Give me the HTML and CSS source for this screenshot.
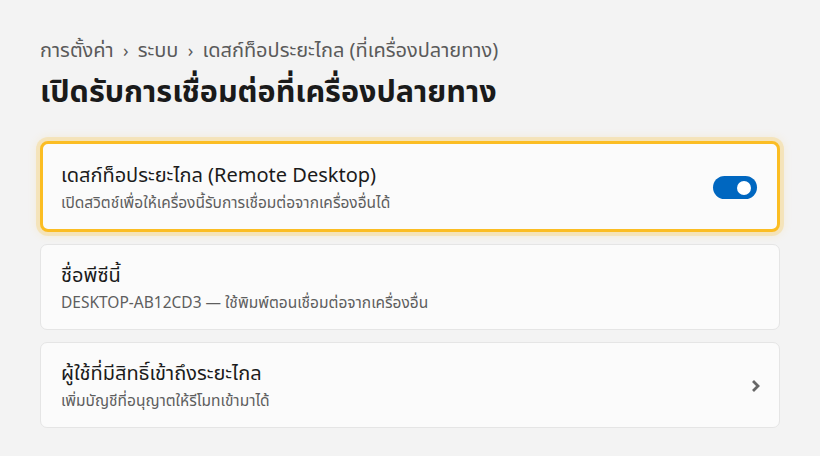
FILE: index.html
```html
<!DOCTYPE html>
<html lang="th">
<head>
<meta charset="utf-8">
<link rel="stylesheet" href="styles.css">
</head>
<body>
<main class="page">
  <nav class="crumbs">การตั้งค่า <span class="sep">›</span> ระบบ <span class="sep">›</span> เดสก์ท็อประยะไกล (ที่เครื่องปลายทาง)</nav>
  <h1 class="title">เปิดรับการเชื่อมต่อที่เครื่องปลายทาง</h1>
  <section class="list">
    <div class="card focused">
      <div class="text">
        <div class="head">เดสก์ท็อประยะไกล (Remote Desktop)</div>
        <div class="sub">เปิดสวิตช์เพื่อให้เครื่องนี้รับการเชื่อมต่อจากเครื่องอื่นได้</div>
      </div>
      <div class="toggle"><span class="knob"></span></div>
    </div>
    <div class="card">
      <div class="text">
        <div class="head">ชื่อพีซีนี้</div>
        <div class="sub">DESKTOP-AB12CD3 — ใช้พิมพ์ตอนเชื่อมต่อจากเครื่องอื่น</div>
      </div>
    </div>
    <div class="card">
      <div class="text">
        <div class="head">ผู้ใช้ที่มีสิทธิ์เข้าถึงระยะไกล</div>
        <div class="sub">เพิ่มบัญชีที่อนุญาตให้รีโมทเข้ามาได้</div>
      </div>
      <svg class="chev" width="10" height="14" viewBox="0 0 10 14"><path d="M3 3 L7 7 L3 11" fill="none" stroke="#666666" stroke-width="2.8" stroke-linecap="square" stroke-linejoin="miter"/></svg>
    </div>
  </section>
</main>
</body>
</html>
```
FILE: styles.css
```css
html, body {
  margin: 0;
  padding: 0;
  background: #f3f3f3;
}
body {
  font-family: "Noto Sans", "Noto Sans Thai", sans-serif;
  color: #1b1b1b;
}
.page {
  padding: 36px 40px 0 40px;
}
.crumbs {
  font-size: 20px;
  line-height: 28px;
  color: #5a5a5a;
}
.sep {
  font-size: 18px;
  padding: 0 4px;
}
.title {
  margin: 6px 0 0 0;
  font-size: 30.5px;
  line-height: 40px;
  font-weight: 700;
  color: #1a1a1a;
}
.list {
  margin-top: 31px;
  display: flex;
  flex-direction: column;
  gap: 12px;
}
.card {
  box-sizing: border-box;
  height: 86px;
  flex: none;
  background: #fbfbfb;
  border: 1px solid #e5e5e5;
  border-radius: 7px;
  padding: 0 20px;
  display: flex;
  align-items: center;
  justify-content: space-between;
}
.card.focused {
  height: 91px;
  border: 3px solid #fbbd23;
  border-radius: 8px;
  box-shadow: 0 0 0 4px rgba(251, 190, 40, 0.22), 0 0 8px 4px rgba(251, 190, 40, 0.12);
  padding-left: 18px;
  padding-right: 20px;
}
.head {
  font-size: 20px;
  line-height: 28px;
  color: #1b1b1b;
}
.sub {
  margin-top: 2px;
  font-size: 15.5px;
  line-height: 22px;
  color: #5e5e5e;
}
.toggle {
  width: 44px;
  height: 23px;
  border-radius: 12px;
  background: #0067c0;
  position: relative;
  margin-top: 2px;
}
.knob {
  position: absolute;
  right: 6px;
  top: 4.5px;
  width: 14px;
  height: 14px;
  border-radius: 50%;
  background: #ffffff;
}
.chev {
  margin-right: -2px;
  margin-top: 2px;
}
```
